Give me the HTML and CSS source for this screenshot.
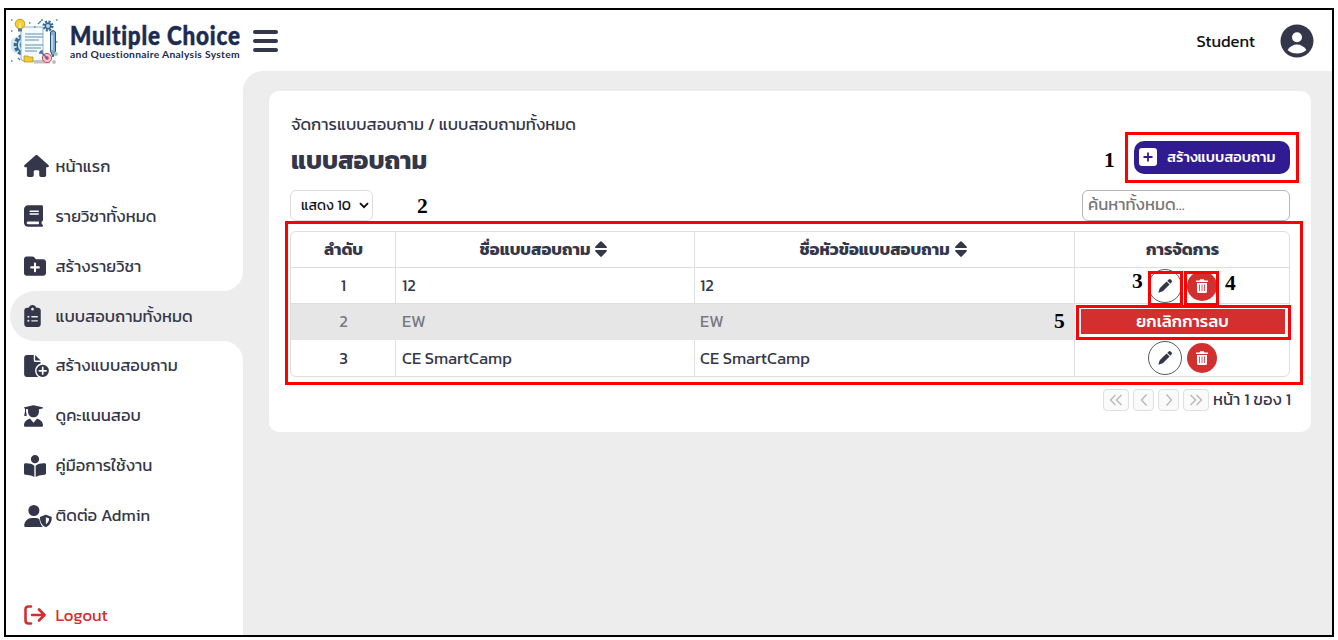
FILE: index.html
```html
<!DOCTYPE html>
<html lang="th">
<head>
<meta charset="utf-8">
<title>Multiple Choice and Questionnaire Analysis System</title>
<link rel="stylesheet" href="styles.css">
</head>
<body>
<div class="frame">
  <header class="topbar">
    <svg class="logo" viewBox="0 0 48 48">
      <path d="M1 27a7 7 0 0 1 11-7v14a7 7 0 0 1-11-7Z" fill="#cfe5f2"/>
      <path d="M12 18a9.500 9.500 0 0 0 0 18" fill="none" stroke="#34688f" stroke-width="3.600" stroke-dasharray="3.200 1.600"/>
      <path d="M12 20a7.500 7.500 0 0 0 0 14M12 24a3.500 3.500 0 0 0 0 6" fill="none" stroke="#34688f" stroke-width="1.400"/>
      <circle cx="38" cy="8" r="4.300" fill="none" stroke="#34688f" stroke-width="2.600" stroke-dasharray="2 1.370"/><circle cx="38" cy="8" r="2.700" fill="#b9d8ea" stroke="#34688f" stroke-width="1.500"/>
      <path d="M11 9H33V43H14Q11 43 11 40Z" fill="#f5fafc" stroke="#8fb4cb"/>
      <path d="M15 16H33M15 19H33M15 22H29M15 27H33M15 30H31M15 33H27" stroke="#5d8fb3" stroke-width="1.200"/>
      <path d="M40.500 14q2.500-3 5 0V33l-2.500 6-2.500-6Z" fill="#80add0" stroke="#285274"/>
      <path d="M42 17V32" stroke="#fff"/>
      <circle cx="10" cy="6" r="4.800" fill="#f9cf2f" stroke="#c79d23"/><path d="M8 10.500h4v3H8Z" fill="#557a97"/><path d="M10 5v5" stroke="#fff"/>
      <path d="M14 38h4l1 1h4v5H14Z" fill="#f3cb2f" stroke="#a88925" stroke-width=".7"/>
      <path d="M24 44H40" stroke="#bdc1c5" stroke-width="3"/><circle cx="46" cy="36" r="2" fill="#bbc0c4"/><circle cx="44" cy="44" r="2" fill="#bbc0c4"/>
      <circle cx="37" cy="40" r="4.600" fill="#f3c3cd" stroke="#c5505f"/><circle cx="37" cy="40" r="1.800" fill="#d64150"/><path d="M30 33l7 7M29 35h3v-3" fill="none" stroke="#426f9a" stroke-width="1.400"/>
      <path d="M1 2h1.500M19 5h1.500M24 9h1.500M31 2h2M46 2h1.500M1 13h1.500M46 24h1.500M1 43h1.500M8 40l2 2M28 6l3-3" stroke="#488bb0" stroke-width="1.500"/>
    </svg>
    <div class="brand"><strong>Multiple Choice</strong><span>and Questionnaire Analysis System</span></div>
    <div class="burger"><i></i><i></i><i></i></div>
    <span class="user">Student</span>
    <svg class="avatar" viewBox="0 0 34 34"><circle cx="17" cy="17" r="16.500" fill="#343749"/><circle cx="17" cy="13.300" r="5" fill="#fff"/><path d="M7.500 26q4-5.500 9.500-5.500t9.500 5.500q-4 3.500-9.500 3.500T7.500 26Z" fill="#fff"/></svg>
  </header>
  <div class="body">
    <nav class="side">
      <a class="item"><svg class="ico w25" viewBox="0 0 576 512"><path d="M575.8 255.500c0 18-15 32.100-32 32.100h-32l.7 160.200V472c0 22.100-17.900 40-40 40H392c-22.100 0-40-17.900-40-40V384c0-17.700-14.300-32-32-32H256c-17.700 0-32 14.300-32 32v88c0 22.100-17.900 40-40 40H104c-22.100 0-40-17.900-40-40V287.600H32c-18 0-32-14-32-32.100c0-9 3-17 10-24L266.400 8c7-7 15-8 22-8s15 2 21 7L564.800 231.500c8 7 12 15 11 24z"/></svg><span>หน้าแรก</span></a>
      <a class="item"><svg class="ico w19" viewBox="0 0 448 512"><path d="M96 0C43 0 0 43 0 96V416c0 53 43 96 96 96H416c17.700 0 32-14.300 32-32s-14.300-32-32-32V384c17.700 0 32-14.300 32-32V32c0-17.700-14.300-32-32-32H96zm0 384H352v64H96c-17.700 0-32-14.300-32-32s14.300-32 32-32zm32-240c0-8.800 7.200-16 16-16H336c8.800 0 16 7.200 16 16s-7.200 16-16 16H144c-8.800 0-16-7.200-16-16zm16 48H336c8.800 0 16 7.200 16 16s-7.200 16-16 16H144c-8.800 0-16-7.200-16-16s7.200-16 16-16z"/></svg><span>รายวิชาทั้งหมด</span></a>
      <a class="item"><svg class="ico w22" viewBox="0 0 512 512"><path d="M512 416c0 35.300-28.700 64-64 64H64c-35.300 0-64-28.700-64-64V96C0 60.700 28.700 32 64 32H192c20.100 0 39.100 9.500 51.200 25.600l19.200 25.600c6 8.100 15.500 12.800 25.600 12.800H448c35.300 0 64 28.700 64 64V416zM232 376c0 13.300 10.700 24 24 24s24-10.700 24-24V312h64c13.300 0 24-10.700 24-24s-10.700-24-24-24H280V200c0-13.300-10.700-24-24-24s-24 10.700-24 24v64H168c-13.300 0-24 10.700-24 24s10.700 24 24 24h64v64z"/></svg><span>สร้างรายวิชา</span></a>
      <a class="item active"><svg class="ico w17" viewBox="0 0 384 512"><path fill-rule="evenodd" d="M192 0c-41.800 0-77.400 26.700-90.500 64H64C28.700 64 0 92.700 0 128V448c0 35.300 28.700 64 64 64H320c35.300 0 64-28.700 64-64V128c0-35.300-28.700-64-64-64H282.500C269.400 26.700 233.800 0 192 0zm0 64a32 32 0 1 1 0 64 32 32 0 1 1 0-64zM72 272a24 24 0 1 1 48 0 24 24 0 1 1-48 0zm104-16H304c8.800 0 16 7.200 16 16s-7.200 16-16 16H176c-8.800 0-16-7.200-16-16s7.200-16 16-16zM72 368a24 24 0 1 1 48 0 24 24 0 1 1-48 0zm88 0c0-8.800 7.200-16 16-16H304c8.800 0 16 7.200 16 16s-7.200 16-16 16H176c-8.800 0-16-7.200-16-16z"/></svg><span>แบบสอบถามทั้งหมด</span></a>
      <a class="item"><svg class="ico w25" viewBox="0 0 576 512"><path d="M0 64C0 28.700 28.700 0 64 0H224V128c0 17.700 14.300 32 32 32H384v38.600C310 219 256 287 256 368c0 59 29 111 74 143L320 512H64c-35.300 0-64-28.700-64-64V64zm384 64H256V0L384 128z"/><path fill-rule="evenodd" d="M288 368a144 144 0 1 1 288 0 144 144 0 1 1-288 0zm164-80c0-11-9-20-20-20s-20 9-20 20v60H352c-11 0-20 9-20 20s9 20 20 20h60v60c0 11 9 20 20 20s20-9 20-20V388h60c11 0 20-9 20-20s-9-20-20-20H452V288z"/></svg><span>สร้างแบบสอบถาม</span></a>
      <a class="item"><svg class="ico w19" viewBox="0 0 448 512"><path d="M219 1c3-1 7-1 10 0L437 49c7 2 11 7 11 15s-4 13-11 15l-85 20v61c0 71-57 128-128 128S96 231 96 160V99L48 88v56l16 95c1 9-3 17-10 17H16c-8 0-12-7-10-15l18-97V80C10 78 0 73 0 64s4-13 11-15L219 1zM129 323c8-3 15 0 21 6l74 85 74-85c6-6 13-9 21-6 75 20 129 81 129 157 0 18-14 32-31 32H31C14 512 0 498 0 480c0-76 54-137 129-157z"/></svg><span>ดูคะแนนสอบ</span></a>
      <a class="item"><svg class="ico w22" viewBox="0 0 512 512"><path d="M160 96a96 96 0 1 1 192 0A96 96 0 1 1 160 96zm80 152V512l-48.400-24.200c-20.900-10.400-43.500-17-66.800-19.300l-96-9.600C12.500 457.200 0 443.500 0 427V224c0-17.700 14.300-32 32-32H62.300c63.600 0 125.600 19.600 177.700 56zm32 264V248c52.100-36.400 114.100-56 177.700-56H480c17.700 0 32 14.300 32 32V427c0 16.400-12.500 30.200-28.800 31.800l-96 9.600c-23.200 2.300-45.900 8.900-66.800 19.300L272 512z"/></svg><span>คู่มือการใช้งาน</span></a>
      <a class="item"><svg class="ico w28" viewBox="0 0 640 512"><path d="M224 256A128 128 0 1 0 224 0a128 128 0 1 0 0 256zm-45.700 48C79.800 304 0 383.800 0 482.300C0 498.700 13.300 512 29.700 512H418.300c5 0 10-1 14-3C389 464 364 405 352 330C327 313 299 304 269.700 304H178.300z"/><path fill-rule="evenodd" d="M496 226c4-2 10-2 14 0l118 46c8 3 12 8 12 17 0 82-28 174-130 221-5 2-10 2-15 0C394 463 366 371 366 289c0-9 5-14 12-17l118-46zm7 59V447c52-29 74-79 76-132L503 285z"/></svg><span>ติดต่อ Admin</span></a>
      <a class="item logout"><svg class="ico w22" viewBox="0 0 22 22" fill="none" stroke="#d32f2f" stroke-width="2.600" stroke-linecap="round" stroke-linejoin="round"><path d="M7 2.500H4.500Q1.500 2.500 1.500 5.500v11q0 3 3 3H7M8 11H20M15 5.500l5.500 5.500-5.500 5.500"/></svg><span>Logout</span></a>
    </nav>
    <main class="main">
      <section class="card">
        <div class="crumb"><span>จัดการแบบสอบถาม / แบบสอบถามทั้งหมด</span></div>
        <div class="headrow"><h1>แบบสอบถาม</h1>
          <button class="create"><svg viewBox="0 0 18 18"><rect width="18" height="18" rx="3" fill="#fff"/><path d="M9 4.500v9M4.500 9h9" stroke="#311b92" stroke-width="1.800"/></svg><span>สร้างแบบสอบถาม</span></button></div>
        <div class="tools"><div class="show"><span>แสดง 10</span><svg viewBox="0 0 10 7"><path d="M1 1.200 5 5.200 9 1.200" fill="none" stroke="#111" stroke-width="1.900"/></svg></div><div class="search"><span>ค้นหาทั้งหมด...</span></div></div>
        <div class="table">
          <div class="row head"><div><span>ลำดับ</span></div><div><span>ชื่อแบบสอบถาม</span><svg class="sort" viewBox="0 0 12 16"><path d="M5 .8q1-1 2 0l4.600 4.700q.8 1.500-.6 1.500H1Q-.400 7 .400 5.500ZM5 15.200q1 1 2 0l4.600-4.700q.8-1.500-.6-1.500H1q-1.400 0-.6 1.500Z"/></svg></div><div><span>ชื่อหัวข้อแบบสอบถาม</span><svg class="sort" viewBox="0 0 12 16"><path d="M5 .8q1-1 2 0l4.600 4.700q.8 1.500-.6 1.500H1Q-.400 7 .400 5.500ZM5 15.200q1 1 2 0l4.600-4.700q.8-1.500-.6-1.500H1q-1.400 0-.6 1.500Z"/></svg></div><div><span>การจัดการ</span></div></div>
          <div class="row"><div><span>1</span></div><div><span>12</span></div><div><span>12</span></div><div class="acts"><b class="edit"><svg viewBox="0 0 14 14"><path d="M9.300 1.700 10.700.4q1-.8 2 .1l.8.8q.9 1 .1 2L12.300 4.700ZM8.600 2.400l3 3L4.800 12.300.3 13.700 1.700 9.300Z"/></svg></b><b class="del"><svg viewBox="0 0 12 14"><path d="M0 1.500h3.500L4.200.3h3.600l.7 1.200H12V3H0Z"/><path fill-rule="evenodd" d="M1 4H11V12.500Q11 14 9.500 14h-7Q1 14 1 12.500ZM3 5.500v6.500h.8V5.500ZM5.600 5.500v6.500h.8V5.500ZM8.200 5.500v6.500H9V5.500Z"/></svg></b></div></div>
          <div class="row gone"><div><span>2</span></div><div><span>EW</span></div><div><span>EW</span></div><div class="acts"><button class="undo"><span>ยกเลิกการลบ</span></button></div></div>
          <div class="row"><div><span>3</span></div><div><span>CE SmartCamp</span></div><div><span>CE SmartCamp</span></div><div class="acts"><b class="edit"><svg viewBox="0 0 14 14"><path d="M9.300 1.700 10.700.4q1-.8 2 .1l.8.8q.9 1 .1 2L12.300 4.700ZM8.600 2.400l3 3L4.800 12.300.3 13.700 1.700 9.300Z"/></svg></b><b class="del"><svg viewBox="0 0 12 14"><path d="M0 1.500h3.500L4.200.3h3.600l.7 1.200H12V3H0Z"/><path fill-rule="evenodd" d="M1 4H11V12.500Q11 14 9.500 14h-7Q1 14 1 12.500ZM3 5.500v6.500h.8V5.500ZM5.600 5.500v6.500h.8V5.500ZM8.200 5.500v6.500H9V5.500Z"/></svg></b></div></div>
        </div>
        <div class="pager">
          <i class="wide"><svg viewBox="0 0 14 12"><path d="M6.500 1 1.500 6l5 5M12.500 1l-5 5 5 5"/></svg></i><i><svg viewBox="0 0 14 12"><path d="M9.500.5 4.500 6l5 5.500"/></svg></i><i><svg viewBox="0 0 14 12"><path d="M4.500.5l5 5.500-5 5.500"/></svg></i><i class="wide"><svg viewBox="0 0 14 12"><path d="M1.500 1l5 5-5 5M7.500 1l5 5-5 5"/></svg></i><span>หน้า 1 ของ 1</span>
        </div>
      </section>
    </main>
  </div>
</div>
<div class="mark m1"></div><div class="mark m2"></div><div class="mark m3"></div><div class="mark m4"></div><div class="mark m5"></div>
<b class="num n1">1</b><b class="num n2">2</b><b class="num n3">3</b><b class="num n4">4</b><b class="num n5">5</b>
</body>
</html>
```
FILE: styles.css
```css
* { box-sizing: border-box; }
body { margin: 0; width: 1338px; height: 640px; overflow: hidden; position: relative; background: #fff; padding: 8px 4px 3px; font-family: Kanit, "Noto Sans Thai", "Noto Sans", sans-serif; font-size: 16.600px; color: #343749; }
span, h1 { white-space: nowrap; }
.frame { height: 629px; border: 2px solid #000; display: flex; flex-direction: column; overflow: hidden; }
.topbar { height: 61px; flex: none; display: flex; align-items: center; background: #fff; padding: 0 18px 0 4px; }
.logo { width: 48px; height: 48px; margin-top: 2px; }
.brand { margin-left: 12px; width: 171px; color: #1c2c50; display: flex; flex-direction: column; padding-top: 1px; }
.brand strong { font: 900 26px/26px Lato, sans-serif; letter-spacing: .9px; white-space: nowrap; transform: scaleX(.865); transform-origin: left; -webkit-text-stroke: .5px #1c2c50; }
.brand span { font: 700 10.300px/12px Lato, sans-serif; letter-spacing: .3px; }
.burger { margin-left: 12px; width: 25px; display: flex; flex-direction: column; gap: 5px; }
.burger i { height: 4px; border-radius: 2px; background: #343749; }
.user { margin: 2px 25px 0 auto; color: #111; }
.avatar { width: 34px; height: 34px; }
.body { height: 564px; flex: none; display: flex; background: #ededed; }
.side { width: 237px; background: #fff; padding: 70px 0 0 4px; display: flex; flex-direction: column; }
.item { height: 50px; flex: none; display: flex; align-items: center; padding-left: 14px; border-radius: 25px 0 0 25px; position: relative; }
.item > span { position: absolute; left: 45.500px; }
.active ~ .item > span { margin-top: -1px; }
.ico { height: 22px; fill: #343749; }
.w17 { width: 17px; } .w19 { width: 19px; } .w22 { width: 22px; } .w25 { width: 25px; } .w28 { width: 28px; }
.active { background: #ededed; }
.active::before, .active::after { content: ""; position: absolute; right: 0; width: 20px; height: 20px; }
.active::before { top: -20px; background: radial-gradient(circle at 0 0, #fff 19.500px, #ededed 20.500px); }
.active::after { bottom: -20px; background: radial-gradient(circle at 0 100%, #fff 19.500px, #ededed 20.500px); }
.logout { margin-top: 57px; color: #d32f2f; height: 36px; }
.logout .ico { fill: none; margin-top: -2px; }
.main { flex: 1; padding: 20px 21px 0 26px; background: radial-gradient(circle at 20px 20px, #ededed 19.500px, #fff 20.500px) 0 0 / 20px 20px no-repeat; }
.card { height: 341px; background: #fff; border-radius: 10px; padding: 20px 21px 0; display: flex; flex-direction: column; }
.crumb { height: 28px; line-height: 28px; padding-left: 1px; }
.headrow { height: 44px; display: flex; justify-content: space-between; }
h1 { margin: 0 0 0 1px; font-size: 24.900px; line-height: 44px; font-weight: 700; }
.create { width: 156px; height: 33px; margin-top: 2px; border: 0; border-radius: 10px; background: #311b92; color: #fff; font: 500 14.600px/20px Kanit, "Noto Sans Thai", "Noto Sans", sans-serif; display: flex; align-items: center; padding: 0 0 0 5px; gap: 10px; }
.create svg { width: 18px; height: 18px; margin-top: -2px; }
.create span { margin-top: -2px; }
.tools { height: 31px; margin-top: 7px; display: flex; justify-content: space-between; }
.show { width: 83px; border: 1px solid #ddd; border-radius: 6px; display: flex; align-items: center; padding-left: 10px; gap: 8px; color: #111; font-size: 14px; }
.show svg { width: 10px; height: 7px; }
.search { width: 208px; border: 1px solid #b5b5b5; border-radius: 6px; padding-left: 5px; line-height: 28px; color: #777; }
.table { margin-top: 10px; height: 146px; flex: none; border: 1px solid #dedede; border-radius: 6px; overflow: hidden; }
.row { height: 36px; display: grid; grid-template-columns: 104px 299px 380px 1fr; border-bottom: 1px solid #dedede; }
.row.head span { margin-top: -1px; }
.row:last-child { border-bottom: 0; }
.row > div { border-left: 1px solid #dedede; display: flex; align-items: center; padding-left: 6px; }
.row > div:nth-child(3) { padding-left: 5px; }
.row > div:first-child { border-left: 0; justify-content: center; padding: 0 0 0 1px; }
.row.head > div { justify-content: center; padding: 0 3px 0 0; }
.row.head > div:first-child, .row.head > div:last-child { padding: 0 0 0 1px; }
.row > .acts { justify-content: center; padding: 0 0 0 1px; }
.head { font-weight: 700; }
.sort { width: 12px; height: 16px; margin: -2px 0 0 5px; fill: #343749; }
.gone { background: #e6e6e6; border-color: #e6e6e6; color: #777985; }
.gone > div { border-color: #e6e6e6; }
.gone > .acts { background: #fff; }
.acts { gap: 5px; }
.edit { width: 34px; height: 34px; border: 1px solid #55586a; border-radius: 50%; display: grid; place-items: center; background: #fff; }
.edit svg { width: 14px; height: 14px; fill: #343749; }
.del { width: 30px; height: 30px; border-radius: 50%; background: #d32f2f; display: grid; place-items: center; }
.del svg { width: 12px; height: 14px; fill: #fff; }
.undo { width: 204px; height: 25px; border: 0; background: #d32f2f; color: #fff; font: 500 16.600px/24px Kanit, "Noto Sans Thai", "Noto Sans", sans-serif; padding: 0; }
.pager { height: 23px; margin: 11px -1px 0 0; display: flex; justify-content: flex-end; align-items: center; gap: 4px; }
.pager i { width: 21px; height: 22px; border: 1px solid #dfdfdf; border-radius: 4px; background: #fafafa; display: grid; place-items: center; }
.pager .wide { width: 26px; }
.pager svg { width: 14px; height: 12px; fill: none; stroke: #bbb; stroke-width: 1.500; }
.mark { position: absolute; border: 3px solid #f00; }
.m1 { left: 1125px; top: 132px; width: 174px; height: 51px; }
.m2 { left: 285px; top: 221px; width: 1018px; height: 164px; }
.m3 { left: 1148px; top: 271px; width: 35px; height: 35px; }
.m4 { left: 1184px; top: 271px; width: 35px; height: 35px; }
.m5 { left: 1076px; top: 305px; width: 215px; height: 35px; }
.num { position: absolute; font: 700 21.500px/24px "Liberation Serif", serif; color: #000; }
.n1 { left: 1104px; top: 148px; } .n2 { left: 417px; top: 194px; } .n3 { left: 1132px; top: 269px; } .n4 { left: 1225px; top: 271px; } .n5 { left: 1054px; top: 309px; }
```
